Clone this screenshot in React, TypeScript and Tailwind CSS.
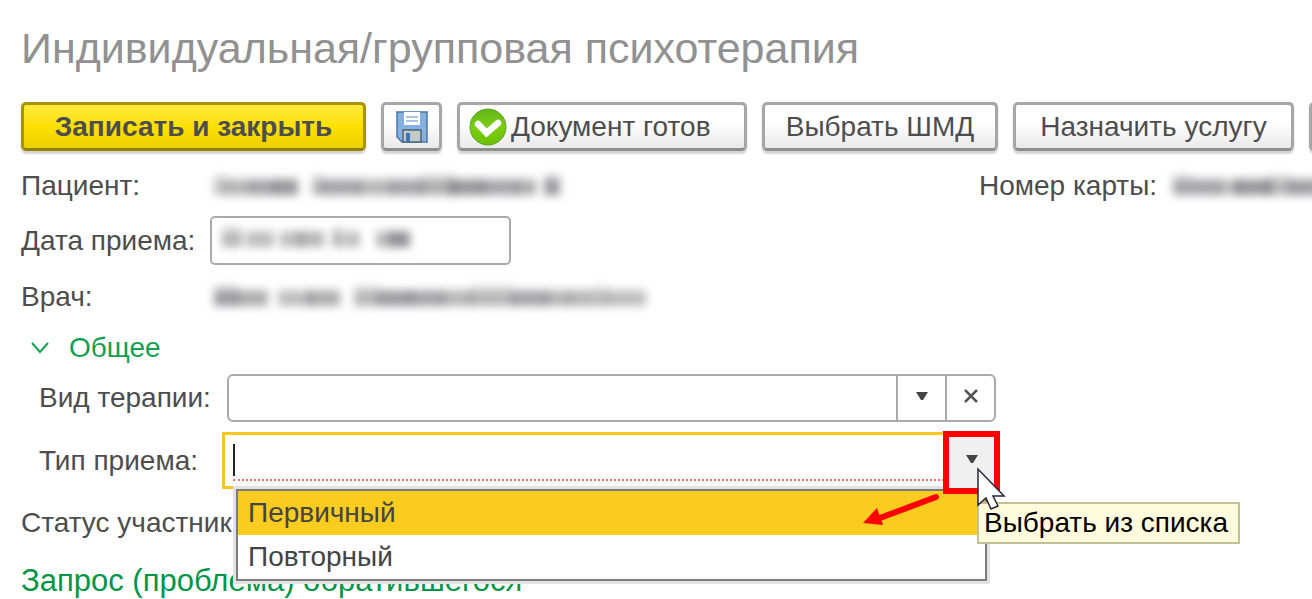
import type { ReactNode } from "react";
import clsx from "clsx";

const patientName = [
  [4, 14, 0.35], [16, 26, 0.4], [40, 26, 0.5], [64, 24, 0.6], [102, 12, 0.4],
  [112, 38, 0.5], [148, 34, 0.4], [180, 32, 0.5], [210, 34, 0.45], [240, 34, 0.6],
  [272, 36, 0.5], [306, 20, 0.45], [334, 16, 0.6],
];

const visitDate = [
  [8, 20, 0.4], [32, 28, 0.35], [66, 22, 0.35], [84, 26, 0.4], [118, 12, 0.4],
  [132, 14, 0.35], [162, 16, 0.4], [176, 20, 0.65],
];

const doctorName = [
  [4, 24, 0.55], [26, 32, 0.45], [68, 34, 0.35], [98, 32, 0.45], [144, 26, 0.4],
  [168, 34, 0.55], [200, 34, 0.5], [232, 30, 0.4], [260, 44, 0.4], [302, 36, 0.5],
  [336, 24, 0.4], [358, 24, 0.4], [382, 16, 0.35], [396, 40, 0.35],
];

const cardNumber = [
  [4, 18, 0.5], [22, 30, 0.5], [50, 20, 0.35], [66, 36, 0.6], [98, 24, 0.4], [120, 30, 0.55],
];

const options = ["Первичный", "Повторный"];

function HiddenValue({ marks, className }: { marks: number[][]; className?: string }) {
  return (
    <svg aria-hidden="true" height="36" className={clsx("shrink-0 overflow-hidden blur-[4px]", className)}>
      {marks.map(([x, width, opacity], i) => (
        <g key={x} fill="#4a4a4e">
          <rect x={x} y={i % 4 === 0 ? 7 : 10} width={width} height={i % 4 === 0 ? 21 : 18} opacity={opacity * 0.55} />
          <rect x={x} y="13" width={width} height="13" opacity={opacity * 0.6} />
        </g>
      ))}
    </svg>
  );
}

type ToolbarButtonProps = {
  children?: ReactNode;
  className?: string;
  label?: string;
  primary?: boolean;
};

function ToolbarButton({ children, className, label, primary }: ToolbarButtonProps) {
  return (
    <button
      type="button"
      aria-label={label}
      className={clsx(
        "flex h-[49px] shrink-0 items-center whitespace-nowrap rounded-[5px] border-[3px] shadow-[0_3px_2px_#d4d4d4]",
        primary
          ? "border-[#a89208] border-b-[#948000] bg-linear-to-b from-[#ffea38] via-[#fde000] to-[#edcf00] font-bold"
          : "border-[#a6a6a6] border-b-[#8e8e8e] bg-linear-to-b from-white from-40% to-[#e9e9e9]",
        className,
      )}
    >
      {children}
    </button>
  );
}

function FloppyIcon() {
  return (
    <svg width="34" height="34" viewBox="0 0 34 34" aria-hidden="true">
      <path d="M2 2H32V32H7L2 27Z" fill="#86b0e0" stroke="#4a74a8" strokeWidth="1.5" />
      <path d="M9 2H25V15H9Z" fill="#fff" />
      <path d="M11 7H23M11 11H23" stroke="#8eb1db" strokeWidth="1.5" />
      <path d="M8 20H26V32H8Z" fill="#c3cac8" stroke="#4d6578" strokeWidth="1.5" />
      <path d="M11 23H15V32H11Z" fill="#3f76ba" />
    </svg>
  );
}

function DoneIcon() {
  return (
    <svg width="38" height="38" viewBox="0 0 38 38" className="shrink-0" aria-hidden="true">
      <defs>
        <linearGradient id="done" x1="0" y1="0" x2="0" y2="1">
          <stop offset="0" stopColor="#62b51c" />
          <stop offset="0.5" stopColor="#7ccc12" />
          <stop offset="1" stopColor="#6cc004" />
        </linearGradient>
      </defs>
      <circle cx="19" cy="19" r="18" fill="url(#done)" stroke="#58a818" />
      <path d="M9 16L17.500 25L29 15" fill="none" stroke="#fff" strokeWidth="6.500" strokeLinecap="round" />
    </svg>
  );
}

function ArrowDown() {
  return (
    <svg width="12" height="8" viewBox="0 0 12 8" aria-hidden="true">
      <path d="M0 0H12L7 8H5Z" fill="#444" />
    </svg>
  );
}

function TypeCombobox() {
  return (
    <div className="relative ml-[-5px] flex h-[57px] max-w-[776px] flex-1 border-[3px] border-[#fac71e] bg-white">
      <input
        id="visit-type"
        role="combobox"
        aria-expanded="true"
        aria-controls="visit-type-list"
        className="mb-[5px] ml-2 min-w-0 flex-1 border-b-2 border-dotted border-[#ff6a6a] outline-none"
      />
      <span className="absolute left-2 top-[9px] h-8 w-[2px] bg-[#222]" />
      <div className="w-[51px]" />
      <ul
        id="visit-type-list"
        role="listbox"
        className="absolute left-[11px] right-2 top-[54px] z-10 border-2 border-[#7c7c7c] bg-white shadow-[0_0_0_3px_#e2e2e4]"
      >
        {options.map((option, i) => (
          <li
            key={option}
            role="option"
            aria-selected={i === 0}
            className={clsx("flex h-11 items-center pl-[10px] text-[#444]", i === 0 && "bg-[#facc20]")}
          >
            {option}
          </li>
        ))}
      </ul>
      <button
        type="button"
        aria-label="Выбрать из списка"
        className="absolute right-[-5px] top-[-4px] z-20 flex h-[63px] w-[57px] items-center justify-center border-[6px] border-[#ff0000] bg-[#f0f0f0] pb-2"
      >
        <ArrowDown />
      </button>
      <svg
        width="80"
        height="36"
        viewBox="0 0 80 36"
        className="absolute right-[53px] top-[56px] z-20"
        aria-hidden="true"
      >
        <path d="M74 6L18 27" stroke="#ff0000" strokeWidth="6" strokeLinecap="round" />
        <path d="M1 32L15 17L21 34Z" fill="#ff0000" />
      </svg>
      <div
        role="tooltip"
        className="absolute left-[calc(100%-18px)] top-[67px] z-20 flex h-[42px] w-[263px] items-center whitespace-nowrap border-2 border-[#c5bf98] bg-[#fffbdc] pl-[5px] text-black"
      >
        Выбрать из списка
      </div>
      <svg
        width="30"
        height="44"
        viewBox="0 0 30 44"
        className="absolute left-[calc(100%-19px)] top-[32px] z-30"
        aria-hidden="true"
      >
        <path d="M2 2V38L10 31L15 42L22 39L17 29H28Z" fill="#fff" stroke="#25253a" strokeWidth="1.5" />
      </svg>
    </div>
  );
}

export default function App() {
  return (
    <main className="h-screen w-full overflow-hidden bg-white pl-[21px] font-['Liberation_Sans',Arial,sans-serif] text-[28px] leading-8 text-[#4d4d4d]">
      <h1 className="pt-6 text-[43px] leading-12 whitespace-nowrap text-[#919191]">
        Индивидуальная/групповая психотерапия
      </h1>

      <div className="mt-[30px] flex gap-[15px]">
        <ToolbarButton primary className="w-[345px] justify-center">
          Записать и закрыть
        </ToolbarButton>
        <ToolbarButton className="w-[61px] justify-center" label="Записать">
          <FloppyIcon />
        </ToolbarButton>
        <ToolbarButton className="w-[290px] gap-1 pl-[9px]">
          <DoneIcon />
          Документ готов
        </ToolbarButton>
        <ToolbarButton className="w-[236px] justify-center">Выбрать ШМД</ToolbarButton>
        <ToolbarButton className="w-[281px] justify-center">Назначить услугу</ToolbarButton>
        <ToolbarButton className="w-[61px] justify-center" label="Ещё" />
      </div>

      <div className="mt-[17px] flex h-9 items-center">
        <span className="w-[189px] shrink-0">Пациент:</span>
        <HiddenValue marks={patientName} className="w-[360px]" />
        <div className="ml-auto flex w-[333px] shrink-0 items-center whitespace-nowrap">
          <span className="w-[190px] shrink-0">Номер карты:</span>
          <HiddenValue marks={cardNumber} className="w-[150px]" />
        </div>
      </div>

      <div className="mt-3 flex h-[49px] items-center">
        <label htmlFor="visit-date" className="w-[189px] shrink-0 whitespace-nowrap">
          Дата приема:
        </label>
        <div className="relative h-full w-[301px]">
          <input id="visit-date" className="h-full w-full rounded-[5px] border-2 border-[#aaa] bg-white px-2" />
          <HiddenValue marks={visitDate} className="pointer-events-none absolute left-1 top-1 w-[210px]" />
        </div>
      </div>

      <div className="mt-[14px] flex h-9 items-center">
        <span className="w-[189px] shrink-0">Врач:</span>
        <HiddenValue marks={doctorName} className="w-[440px]" />
      </div>

      <section>
        <button type="button" className="mt-[17px] flex h-8 items-center gap-5 pl-[10px] text-[#12a04f]">
          <svg width="18" height="12" viewBox="0 0 18 12" aria-hidden="true">
            <path d="M1 1L9 10L17 1" fill="none" stroke="currentColor" strokeWidth="2" />
          </svg>
          Общее
        </button>

        <div className="mt-[10px] flex h-[48px] items-center pl-[18px]">
          <label htmlFor="therapy-kind" className="w-[188px] shrink-0 whitespace-nowrap">
            Вид терапии:
          </label>
          <div className="flex h-full max-w-[769px] flex-1 rounded-[6px] border-2 border-[#aaa] bg-white">
            <input id="therapy-kind" className="min-w-0 flex-1 px-2 outline-none" />
            <button
              type="button"
              aria-label="Выбрать"
              className="flex w-[49px] items-center justify-center border-l-2 border-[#aaa] pb-1"
            >
              <ArrowDown />
            </button>
            <button
              type="button"
              aria-label="Очистить"
              className="flex w-[49px] items-center justify-center border-l-2 border-[#aaa] pb-1"
            >
              <svg width="14" height="14" viewBox="0 0 14 14" aria-hidden="true">
                <path d="M1 1L13 13M13 1L1 13" stroke="#555" strokeWidth="2.500" />
              </svg>
            </button>
          </div>
        </div>

        <div className="mt-[10px] flex items-center pl-[18px]">
          <label htmlFor="visit-type" className="w-[188px] shrink-0 whitespace-nowrap">
            Тип приема:
          </label>
          <TypeCombobox />
        </div>
      </section>

      <p className="mt-[18px] whitespace-nowrap">Статус участника:</p>
      <h2 className="mt-6 text-[31px] leading-9 whitespace-nowrap text-[#009646]">
        Запрос (проблема) обратившегося
      </h2>
    </main>
  );
}
